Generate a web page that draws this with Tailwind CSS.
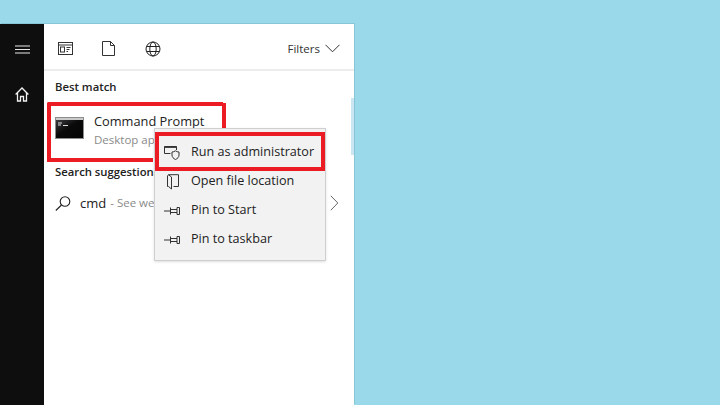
<!DOCTYPE html>
<html><head><meta charset="utf-8">
<script src="https://cdn.jsdelivr.net/npm/@tailwindcss/browser@4"></script>
</head>
<body class="m-0">
<div class="w-[720px] h-[405px] bg-[#9ad9ea] pt-[24px] overflow-hidden font-['Open_Sans','Noto_Sans',sans-serif] text-[#1f1f1f]">
  <div class="relative w-[354px] h-[381px] flex bg-white shadow-[1px_-1px_0_#88c6d6]">
    <aside class="w-[44px] shrink-0 bg-[#0e0e0e] flex flex-col items-center pt-[21px] gap-[33px]">
      <svg width="15" height="9" viewBox="0 0 15 9" fill="none" stroke="#e8e8e8" stroke-width="1"><path d="M0 1h15M0 4.500h15M0 8h15"/></svg>
      <svg width="14" height="15" viewBox="0 0 14 15" fill="none" stroke="#f2f2f2" stroke-width="1.300"><path d="M.6 7.500 7 1l6.400 6.500M2.500 6v8h3v-4.500h3V14h3V6"/></svg>
    </aside>
    <main class="flex-1 min-w-0 flex flex-col">
      <header class="h-[47px] shrink-0 border-b-2 border-[#ececec] flex items-center pl-[14px] pr-[14px] pt-[4px]">
        <svg width="15" height="13" viewBox="0 0 15 13" fill="none" stroke="#333" stroke-width="1"><rect x=".5" y=".5" width="14" height="12"/><path d="M.5 3h14"/><rect x="2.500" y="5" width="4" height="5"/><path d="M8.500 5.500h4M8.500 7.500h3M8.500 9.500h1.500"/></svg>
        <svg class="ml-[29px]" width="13" height="15" viewBox="0 0 13 15" fill="none" stroke="#333" stroke-width="1"><path d="M.5.500h8l4 4v10H.5zM8.500.500v4h4"/></svg>
        <svg class="ml-[30px]" width="16" height="16" viewBox="0 0 16 16" fill="none" stroke="#222" stroke-width="1"><circle cx="8" cy="8" r="7"/><ellipse cx="8" cy="8" rx="3.200" ry="7"/><path d="M1.500 5.500h13M1.500 10.500h13"/></svg>
        <span class="ml-auto text-[11.500px] leading-none text-[#333]">Filters</span>
        <svg class="ml-[5px]" width="15" height="9" viewBox="0 0 15 9" fill="none" stroke="#333" stroke-width="1"><path d="m.5.800 7 7 7-7"/></svg>
      </header>
      <section class="pl-[11px] pt-[7px]">
        <h2 class="text-[11.300px] leading-[17px] font-semibold text-[#222]">Best match</h2>
        <div class="flex items-center h-[50px] mt-[8px]">
          <svg width="29" height="22" viewBox="0 0 29 22"><defs><linearGradient id="cmdfill" x1="0" y1="0" x2="1" y2="1"><stop offset="0" stop-color="#3c3c40"/><stop offset=".45" stop-color="#0a0a0a"/><stop offset="1" stop-color="#050505"/></linearGradient></defs><rect width="29" height="22" fill="#8d8d8d"/><rect x="1" y="1" width="27" height="2" fill="#c9c9c9"/><rect x="1" y="3" width="27" height="18" fill="url(#cmdfill)"/><path d="M3 6h4M3 8h3M8 8.500h5" stroke="#ddd" stroke-width="1"/></svg>
          <div class="ml-[10px] min-w-0 mt-[4px]">
            <div class="text-[12.800px] leading-[19px] text-[#222] whitespace-nowrap">Command Prompt</div>
            <div class="text-[11.500px] leading-[18px] text-[#8a8a8a] whitespace-nowrap">Desktop app</div>
          </div>
        </div>
        <h2 class="text-[11.300px] leading-[17px] font-semibold text-[#222] mt-[10px] whitespace-nowrap">Search suggestions</h2>
        <div class="flex items-center h-[30px] mt-[8px] pr-[15px]">
          <svg width="16" height="15" viewBox="0 0 16 15" fill="none" stroke="#222" stroke-width="1.100"><circle cx="10" cy="5.500" r="4.800"/><path d="M6.500 9 .8 14.500"/></svg>
          <span class="ml-[9px] text-[13px] text-[#222] leading-none">cmd</span>
          <span class="ml-[4px] text-[11.500px] text-[#8a8a8a] leading-none whitespace-nowrap">- See web results</span>
          <svg class="ml-auto" width="9" height="16" viewBox="0 0 9 16" fill="none" stroke="#666" stroke-width="1"><path d="m.8.800 7 7.200-7 7.200"/></svg>
        </div>
      </section>
    </main>
    <div class="absolute right-0 top-[74px] w-[3px] h-[57px] bg-[#c9e6f2]"></div>

    <div class="absolute left-[47px] top-[78px] w-[176px] h-[60px] border-l-[4px] border-t-[4px] border-[#ec1c24] rounded-tl-[2px]"></div>
    <div class="absolute left-[222px] top-[79px] w-[4px] h-[26px] bg-[#ec1c24]"></div>
    <div class="absolute left-[47px] top-[134px] w-[106px] h-[4px] bg-[#ec1c24]"></div>

    <div class="absolute left-[154px] top-[104px] w-[172px] h-[133px] bg-[#f2f2f2] border border-[#cfcfcf] shadow-sm pt-[9px] text-[12.600px] text-[#222]">
      <div class="h-[29px] flex items-center pl-[9px] gap-[11px]">
        <svg width="16" height="14" viewBox="0 0 16 14" fill="none" stroke="#333" stroke-width="1"><path d="M6.500 7.500H.5v-7h12V4"/><path d="M.5 1.200h12" stroke-width="1.400"/><path d="M8 6c1.400 0 2.300-.4 3.500-1.200C12.700 5.600 13.600 6 15 6v3c0 2.200-1.500 3.600-3.500 4.500C9.500 12.600 8 11.200 8 9z"/></svg>
        <span class="whitespace-nowrap">Run as administrator</span>
      </div>
      <div class="h-[29px] flex items-center pl-[11px] gap-[11px]">
        <svg width="14" height="16" viewBox="0 0 14 16" fill="none" stroke="#333" stroke-width="1"><path d="M2.500.700h10V12.500H7.500M2.500.700 5.500 3v12l-3-2.500h-1V2z"/></svg>
        <span class="whitespace-nowrap">Open file location</span>
      </div>
      <div class="h-[29px] flex items-center pl-[9px] gap-[11px]">
        <svg width="16" height="10" viewBox="0 0 16 10" fill="none" stroke="#333" stroke-width="1"><path d="M0 5h6M6.500 1.500v7M6.500 3.500h6.500M6.500 6.500h6.500M13 1.500h2.500v7H13z"/></svg>
        <span class="whitespace-nowrap">Pin to Start</span>
      </div>
      <div class="h-[29px] flex items-center pl-[9px] gap-[11px]">
        <svg width="16" height="10" viewBox="0 0 16 10" fill="none" stroke="#333" stroke-width="1"><path d="M0 5h6M6.500 1.500v7M6.500 3.500h6.500M6.500 6.500h6.500M13 1.500h2.500v7H13z"/></svg>
        <span class="whitespace-nowrap">Pin to taskbar</span>
      </div>
    </div>
    <div class="absolute left-[155px] top-[108px] w-[170px] h-[39px] border-[4px] border-[#ec1c24]"></div>
  </div>
</div>
</body></html>
